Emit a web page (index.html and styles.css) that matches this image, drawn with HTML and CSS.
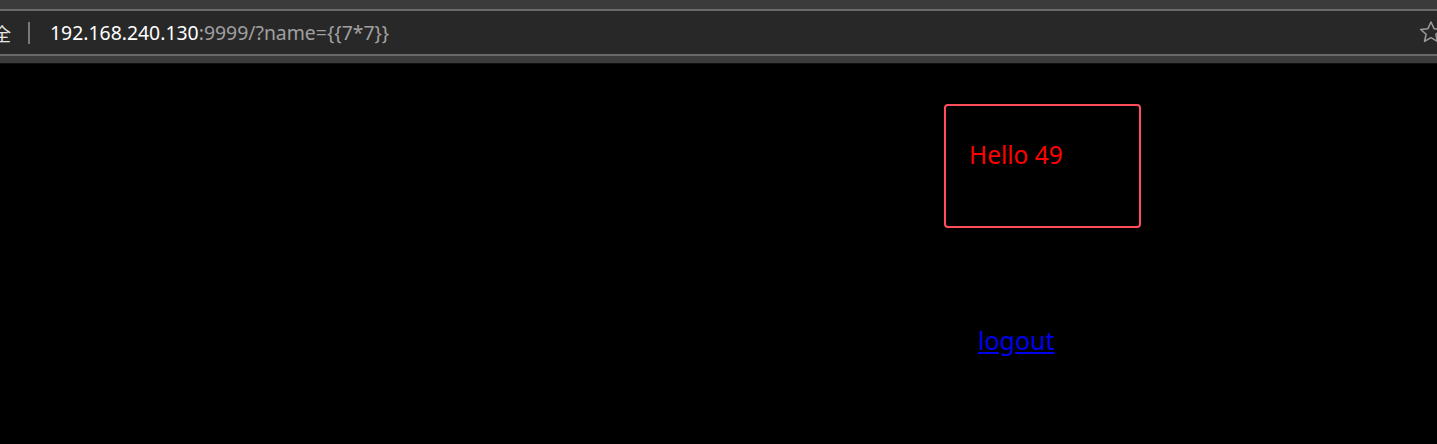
FILE: index.html
```html
<!DOCTYPE html>
<html>
<head>
<meta charset="utf-8">
<link rel="stylesheet" href="styles.css">
</head>
<body>
<div class="chrome">
  <div class="chrome-top"></div>
  <div class="addr">
    <span class="secure">全</span>
    <span class="sep"></span>
    <span class="url"><span class="host">192.168.240.130</span><span class="rest">:9999/?name={{7*7}}</span></span>
    <svg class="star" width="26" height="26" viewBox="0 0 22 22"><path d="M11 2.5 L13.6 8.2 L19.8 8.8 L15.1 12.9 L16.5 19 L11 15.8 L5.5 19 L6.9 12.9 L2.2 8.8 L8.4 8.2 Z" fill="none" stroke="#9a9a9a" stroke-width="1.3" stroke-linejoin="round"/></svg>
  </div>
  <div class="chrome-bottom"></div>
</div>
<main class="page">
  <div class="card"><span class="hello">Hello 49</span></div>
  <a class="logout" href="#">logout</a>
</main>
</body>
</html>
```

FILE: styles.css
```css
html, body {
  margin: 0;
  padding: 0;
  background: #000;
  overflow: hidden;
}
body {
  width: 1437px;
  height: 444px;
  font-family: "Noto Sans", "Noto Sans CJK SC", sans-serif;
}
.chrome {
  display: flex;
  flex-direction: column;
  height: 64px;
}
.chrome-top {
  height: 9px;
  background: #3b3b3b;
  border-bottom: 2px solid #6a6a6a;
}
.addr {
  height: 43px;
  background: #282828;
  display: flex;
  align-items: center;
  position: relative;
}
.secure {
  color: #e6e6e6;
  font-size: 18px;
  margin-left: -7px;
  width: 21px;
  overflow: hidden;
  font-family: "Noto Sans CJK SC", sans-serif;
}
.sep {
  width: 2px;
  height: 22px;
  background: #7a7a7a;
  margin-left: 14px;
}
.url {
  margin-left: 20px;
  font-size: 19.4px;
  letter-spacing: 0;
}
.host { color: #ffffff; }
.rest { color: #a0a0a0; }
.star {
  position: absolute;
  left: 1418px;
  top: 8px;
}
.chrome-bottom {
  height: 7px;
  background: #3b3b3b;
  border-top: 2px solid #6a6a6a;
  border-bottom: 1px solid #111;
}
.page {
  display: flex;
  flex-direction: column;
  align-items: flex-start;
  padding-left: 944px;
  padding-top: 40px;
}
.card {
  box-sizing: border-box;
  width: 197px;
  height: 124px;
  border: 2px solid #ff4d5c;
  border-radius: 4px;
  padding: 35px 0 0 23px;
}
.hello {
  color: #ff0000;
  font-size: 24.5px;
  line-height: 28px;
  display: block;
}
.logout {
  margin-top: 97px;
  margin-left: 34px;
  color: #0000ee;
  font-size: 25px;
  line-height: 30px;
}
```
